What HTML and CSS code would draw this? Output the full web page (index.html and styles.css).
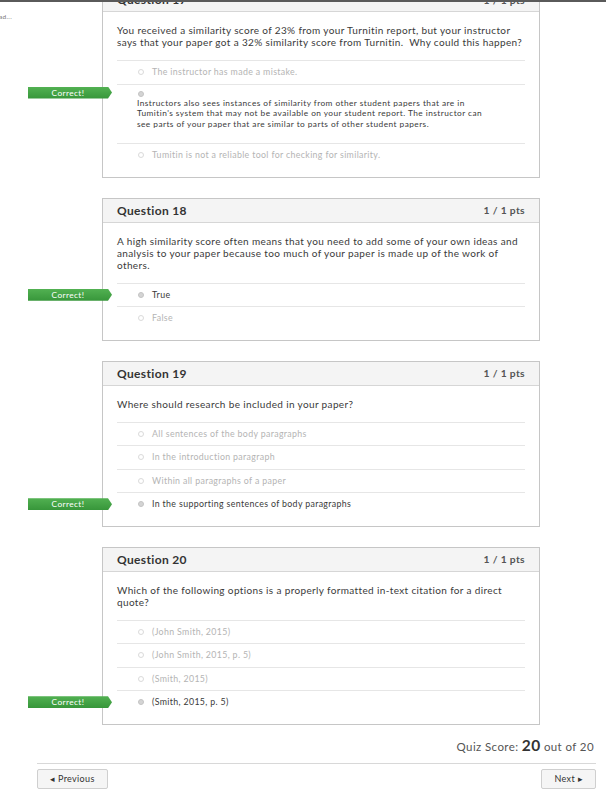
FILE: index.html
```html
<!DOCTYPE html>
<html>
<head>
<meta charset="utf-8">
<link rel="stylesheet" href="styles.css">
</head>
<body>
<div class="topbar"></div>
<div class="viewport">
  <div class="layout">
    <aside class="side"><span class="crumb">ad...</span></aside>
    <main class="quiz">
      <section class="card">
        <header class="card-head"><h2 class="q-title">Question 17</h2><span class="pts">1 / 1 pts</span></header>
        <div class="card-body">
          <p class="q-text">You received a similarity score of 23% from your Turnitin report, but your instructor says that your paper got a 32% similarity score from Turnitin.&nbsp; Why could this happen?</p>
          <ul class="answers">
            <li class="answer"><span class="radio"></span><span class="a-text">The instructor has made a mistake.</span></li>
            <li class="answer answer-comment"><div class="badge">Correct!</div><span class="radio radio-on radio-alone"></span><p class="comment">Instructors also sees instances of similarity from other student papers that are in Tumitin's system that may not be available on your student report. The instructor can see parts of your paper that are similar to parts of other student papers.</p></li>
            <li class="answer"><span class="radio"></span><span class="a-text">Tumitin is not a reliable tool for checking for similarity.</span></li>
          </ul>
        </div>
      </section>

      <section class="card">
        <header class="card-head"><h2 class="q-title">Question 18</h2><span class="pts">1 / 1 pts</span></header>
        <div class="card-body">
          <p class="q-text">A high similarity score often means that you need to add some of your own ideas and analysis to your paper because too much of your paper is made up of the work of others.</p>
          <ul class="answers">
            <li class="answer selected"><div class="badge">Correct!</div><span class="radio radio-on"></span><span class="a-text">True</span></li>
            <li class="answer"><span class="radio"></span><span class="a-text">False</span></li>
          </ul>
        </div>
      </section>

      <section class="card">
        <header class="card-head"><h2 class="q-title">Question 19</h2><span class="pts">1 / 1 pts</span></header>
        <div class="card-body">
          <p class="q-text">Where should research be included in your paper?</p>
          <ul class="answers">
            <li class="answer"><span class="radio"></span><span class="a-text">All sentences of the body paragraphs</span></li>
            <li class="answer"><span class="radio"></span><span class="a-text">In the introduction paragraph</span></li>
            <li class="answer"><span class="radio"></span><span class="a-text">Within all paragraphs of a paper</span></li>
            <li class="answer selected"><div class="badge">Correct!</div><span class="radio radio-on"></span><span class="a-text">In the supporting sentences of body paragraphs</span></li>
          </ul>
        </div>
      </section>

      <section class="card">
        <header class="card-head"><h2 class="q-title">Question 20</h2><span class="pts">1 / 1 pts</span></header>
        <div class="card-body">
          <p class="q-text">Which of the following options is a properly formatted in-text citation for a direct quote?</p>
          <ul class="answers">
            <li class="answer"><span class="radio"></span><span class="a-text">(John Smith, 2015)</span></li>
            <li class="answer"><span class="radio"></span><span class="a-text">(John Smith, 2015, p. 5)</span></li>
            <li class="answer"><span class="radio"></span><span class="a-text">(Smith, 2015)</span></li>
            <li class="answer selected"><div class="badge">Correct!</div><span class="radio radio-on"></span><span class="a-text">(Smith, 2015, p. 5)</span></li>
          </ul>
        </div>
      </section>
    </main>
  </div>

  <footer class="footer">
    <div class="score">Quiz Score: <strong class="score-num">20</strong> out of 20</div>
    <div class="nav">
      <button class="btn">&#9666; Previous</button>
      <button class="btn">Next &#9656;</button>
    </div>
  </footer>
</div>
</body>
</html>
```

FILE: styles.css
```css
* { box-sizing: border-box; }

html, body {
  margin: 0;
  padding: 0;
  background: #fff;
}

body {
  font-family: Lato, "Open Sans", sans-serif;
  color: #333;
  width: 606px;
  height: 800px;
  overflow: hidden;
}

.topbar {
  height: 2px;
  background: #5a5a5a;
}

.viewport {
  overflow: hidden;
  height: 798px;
}

.layout {
  display: grid;
  grid-template-columns: 102px 438px;
  margin-top: -15px;
}

.side {
  padding-top: 26px;
  overflow: hidden;
}

.crumb {
  display: block;
  font-size: 6.5px;
  line-height: 8px;
  letter-spacing: 0.3px;
  color: #777;
  margin-left: -1px;
}

.quiz {
  display: flex;
  flex-direction: column;
  gap: 20px;
}

.card {
  border: 1px solid #c6c6c6;
  background: #fff;
}

.card-head {
  height: 24px;
  background: #f4f4f4;
  border-bottom: 1px solid #d6d6d6;
  display: flex;
  align-items: center;
  justify-content: space-between;
  padding: 0 14px 0 14px;
}

.q-title {
  margin: 0;
  font-size: 12px;
  letter-spacing: 0.35px;
  font-weight: 700;
  color: #333;
}

.pts {
  font-size: 10.3px;
  letter-spacing: 0.35px;
  font-weight: 700;
  color: #555;
}

.card-body {
  padding: 12px 14px 10px 14px;
}

.q-text {
  margin: 0;
  font-size: 10px;
  letter-spacing: 0.36px;
  line-height: 12px;
  color: #3a3a3a;
}

.answers {
  list-style: none;
  margin: 12px 0 0 0;
  padding: 0;
}

.answer {
  position: relative;
  display: flex;
  align-items: center;
  border-top: 1px solid #e6e6e6;
  padding: 6px 0 6px 21px;
  line-height: 10.5px;
  font-size: 8.8px;
  letter-spacing: 0.35px;
  color: #b4b4b4;
}

.answer.selected {
  color: #3a3a3a;
}

.radio {
  width: 6px;
  height: 6px;
  border-radius: 50%;
  border: 1px solid #dadada;
  margin-right: 8px;
  flex: none;
}

.radio-on {
  background: #d4d4d4;
  border-color: #c4c4c4;
}

.answer-comment {
  display: block;
  padding: 6px 0 14px 20px;
}

.radio-alone {
  display: block;
  margin: 0 0 1px 1px;
}

.comment {
  margin: 0;
  width: 350px;
  font-size: 8.3px;
  letter-spacing: 0.45px;
  line-height: 10.5px;
  color: #3a3a3a;
}

.badge {
  position: absolute;
  left: -89px;
  top: 50%;
  transform: translateY(-50%);
  width: 84px;
  height: 12px;
  line-height: 12px;
  padding-right: 4px;
  text-align: center;
  font-size: 8.3px;
  letter-spacing: 0.4px;
  color: #fff;
  background: linear-gradient(#52b152, #37963a);
  clip-path: polygon(0 0, 80px 0, 84px 50%, 80px 100%, 0 100%);
}

.answer-comment .badge {
  top: 2px;
  transform: none;
}

.footer {
  padding: 11px 10px 0 37px;
}

.score {
  text-align: right;
  font-size: 11.5px;
  letter-spacing: 0.4px;
  line-height: 18px;
  color: #555;
  padding-right: 2px;
  padding-bottom: 7px;
  border-bottom: 1px solid #d8d8d8;
}

.score-num {
  font-size: 15.5px;
  color: #333;
}

.nav {
  display: flex;
  justify-content: space-between;
  padding-top: 5px;
}

.btn {
  font-family: Lato, "Open Sans", sans-serif;
  font-size: 9px;
  letter-spacing: 0.35px;
  color: #333;
  height: 20px;
  padding: 0 12px;
  background: #f5f5f5;
  border: 1px solid #cfcfcf;
  border-radius: 2px;
}
```
